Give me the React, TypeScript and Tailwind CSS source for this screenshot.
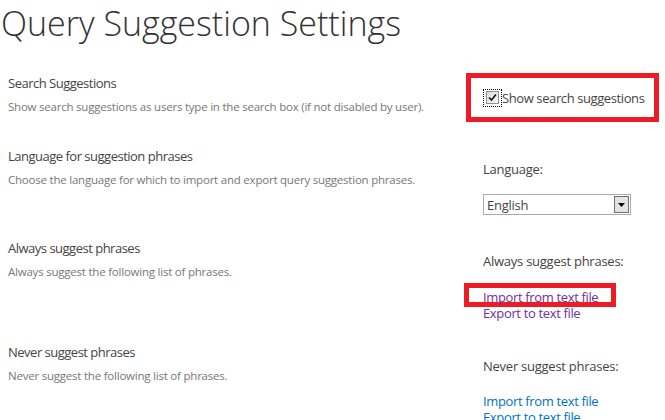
import React from 'react';

const font = { fontFamily: '"Open Sans", "Liberation Sans", sans-serif' };

function Section({
  title,
  description,
  children,
  className = '',
}: {
  title: string;
  description: string;
  children: React.ReactNode;
  className?: string;
}) {
  return (
    <div className={`flex ${className}`}>
      <div className="w-[483px] shrink-0 pl-2">
        <div className="text-[13px] leading-[18px] tracking-[-0.5px] text-[#444]">{title}</div>
        <div className="mt-[7px] text-[11.5px] leading-[16px] tracking-[-0.22px] text-[#777]">{description}</div>
      </div>
      <div className="flex-1">{children}</div>
    </div>
  );
}

function LinkPair({ visited, highlight }: { visited?: boolean; highlight?: boolean }) {
  const color = visited ? 'text-[#7030a0]' : 'text-[#0072c6]';
  return (
    <div className={`text-[13px] leading-[16px] tracking-[-0.35px] ${color}`}>
      <div className="relative">
        {highlight && (
          <div className="absolute -left-[19px] top-[-6px] h-[24px] w-[152px] border-[5px] border-[#ed1c24]" />
        )}
        <a href="#" className="relative">Import from text file</a>
      </div>
      <div>
        <a href="#">Export to text file</a>
      </div>
    </div>
  );
}

export default function App() {
  return (
    <div className="h-[420px] w-[665px] overflow-hidden bg-white" style={font}>
      <h1 className="pl-[1px] text-[34px] font-light leading-[46px] text-[#333]">
        Query Suggestion Settings
      </h1>

      <Section
        className="mt-[28px]"
        title="Search Suggestions"
        description="Show search suggestions as users type in the search box (if not disabled by user)."
      >
        <div className="-ml-[17px] -mt-[1px] flex h-[49px] w-[193px] items-center border-[5px] border-[#ed1c24] pl-[12px]">
          <span className="flex h-[18px] w-[19px] items-center justify-center border border-dotted border-black">
            <span className="flex h-[13px] w-[13px] items-center justify-center border border-[#8f8f8f] bg-gradient-to-br from-[#dcdcdc] to-[#f6f6f6]">
              <svg width="9" height="9" viewBox="0 0 9 9">
                <path d="M1 4.5 L3.5 7 L8 1.5" fill="none" stroke="#111" strokeWidth="1.6" />
              </svg>
            </span>
          </span>
          <span className="text-[13px] leading-[18px] tracking-[-0.4px] text-[#444]">Show search suggestions</span>
        </div>
      </Section>

      <Section
        className="mt-[25px]"
        title="Language for suggestion phrases"
        description="Choose the language for which to import and export query suggestion phrases."
      >
        <div className="pt-[13px] text-[13px] leading-[18px] tracking-[-0.25px] text-[#444]">Language:</div>
        <div className="mt-[16px] flex h-[21px] w-[148px] items-center border border-[#ababab] bg-white">
          <span className="flex-1 pl-[3px] text-[13px] leading-[18px] tracking-[-0.25px] text-[#444]">English</span>
          <span className="mr-[1px] flex h-[17px] w-[15px] items-center justify-center border border-[#707070] bg-[#e3e3e3]">
            <svg width="7" height="4" viewBox="0 0 7 4">
              <path d="M0 0 H7 L3.5 4 Z" fill="#000" />
            </svg>
          </span>
        </div>
      </Section>

      <Section
        className="mt-[24px]"
        title="Always suggest phrases"
        description="Always suggest the following list of phrases."
      >
        <div className="pt-[13px] text-[13px] leading-[18px] tracking-[-0.25px] text-[#444]">Always suggest phrases:</div>
        <div className="mt-[19px]">
          <LinkPair visited highlight />
        </div>
      </Section>

      <Section
        className="mt-[22px]"
        title="Never suggest phrases"
        description="Never suggest the following list of phrases."
      >
        <div className="pt-[14px] text-[13px] leading-[18px] tracking-[-0.25px] text-[#444]">Never suggest phrases:</div>
        <div className="mt-[18px]">
          <LinkPair />
        </div>
      </Section>
    </div>
  );
}
